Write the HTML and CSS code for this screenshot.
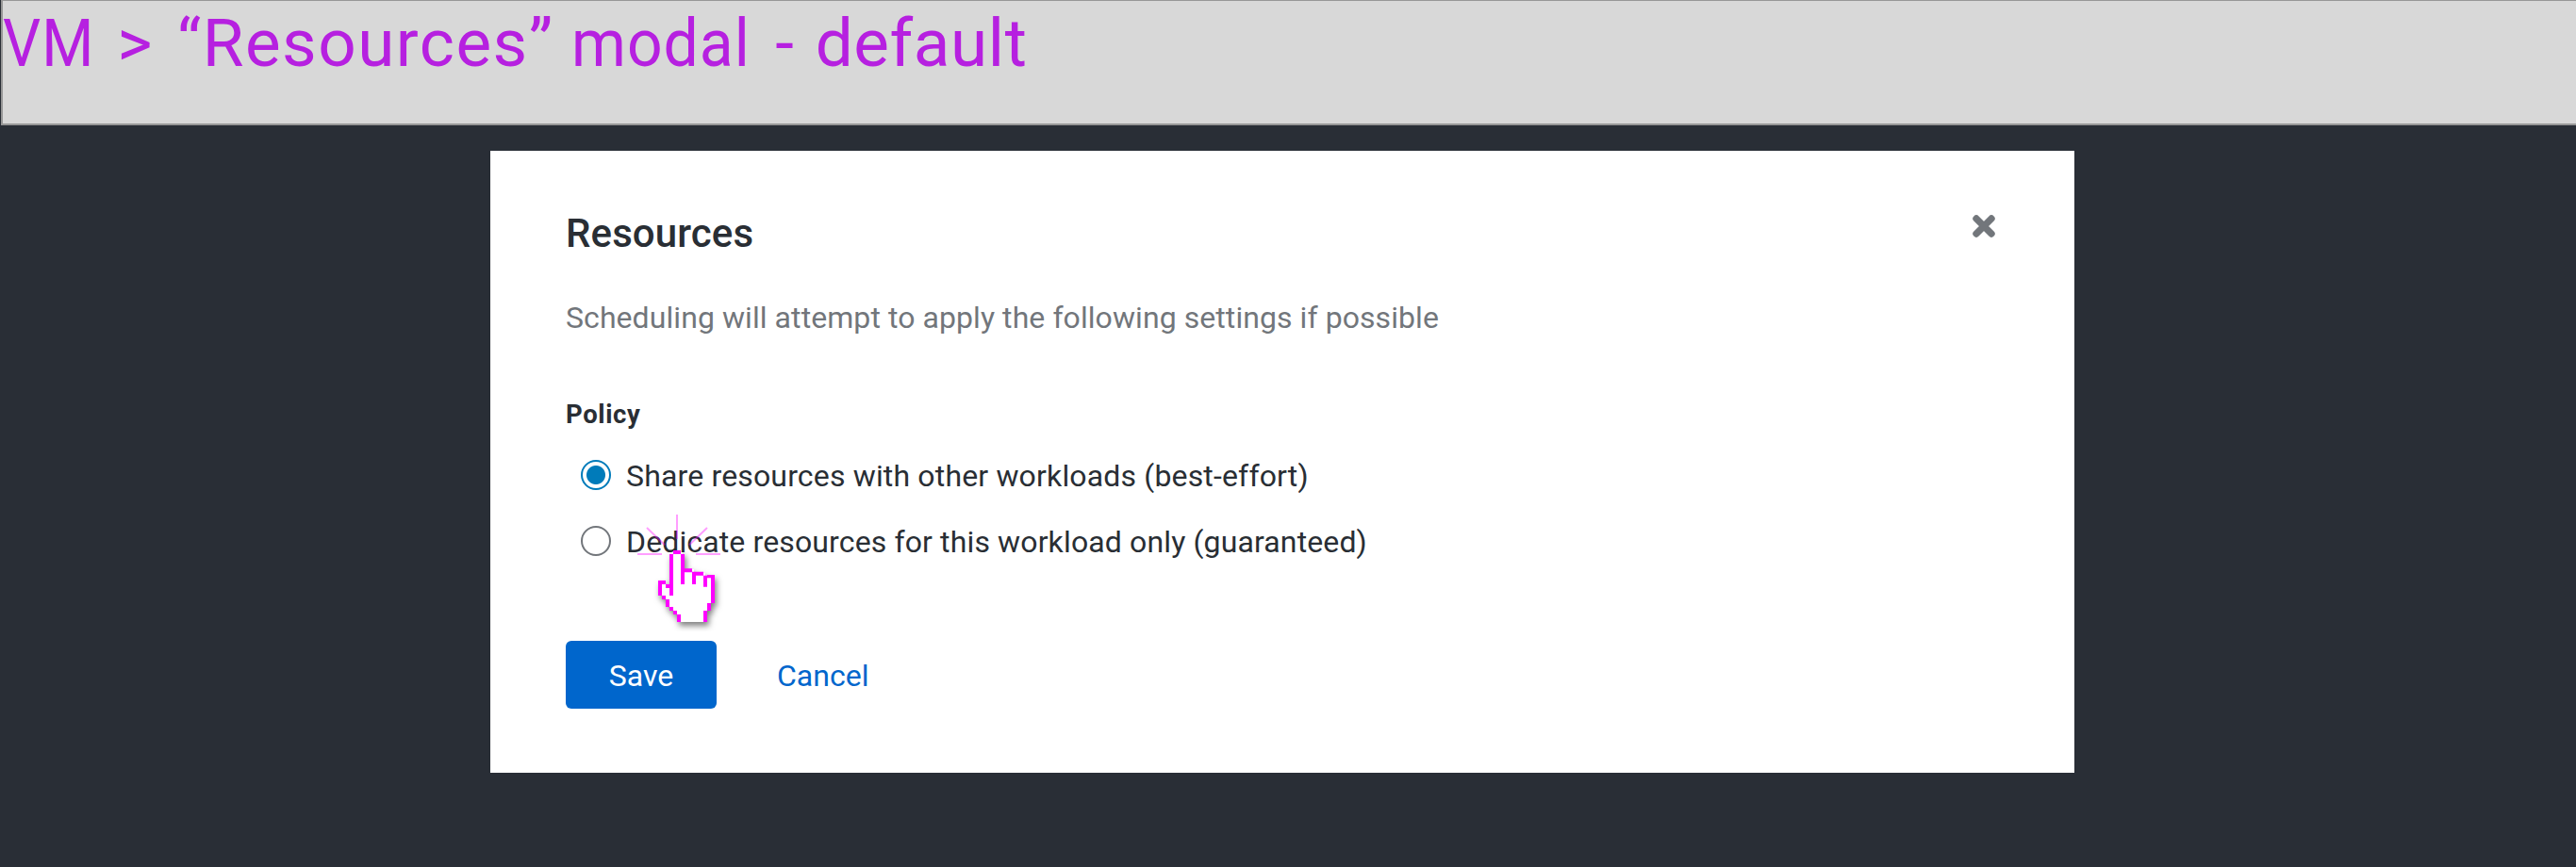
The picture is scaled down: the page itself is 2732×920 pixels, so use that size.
FILE: index.html
```html
<!DOCTYPE html>
<html lang="en">
<head>
<meta charset="utf-8">
<title>Resources</title>
<link rel="stylesheet" href="styles.css">
</head>
<body>
<header class="banner"><h1 class="banner-title"><span class="w-vm">VM</span> <span class="w-gt">&gt;</span> <span class="w-res">“Resources”</span> <span class="w-modal">modal</span> - <span class="w-default">default</span></h1></header>
<main class="backdrop">
<section class="modal" role="dialog" aria-labelledby="modal-title">
<div class="modal-head">
<h2 class="modal-title" id="modal-title">Resources</h2>
<button class="close" aria-label="Close"><svg width="24" height="24" viewBox="0 0 24 24"><path d="M4 4 20 20M20 4 4 20" stroke="#72767b" stroke-width="7.4" stroke-linecap="round"/></svg></button>
</div>
<p class="description">Scheduling will attempt to apply the following settings if possible</p>
<h3 class="group-label">Policy</h3>
<div class="options">
<label class="option"><span class="radio radio-on"></span><span class="option-text share">Share resources with other workloads (best-effort)</span></label>
<label class="option"><span class="radio"></span><span class="option-text dedicate">Dedicate resources for this workload only (guaranteed)</span>
<svg class="pointer" width="120" height="140" viewBox="0 0 360 420">
<g stroke="#f0f" stroke-opacity=".38" stroke-width="6" fill="none"><path d="M174 48V126M78 90 135 145M270 90 213 145M48 174H126M234 174H312"/></g>
<g class="hand"><path fill="#fff" d="M156 168H192V222H228V234H264V244H288V330H276V354H264V390H180V366H168V354H156V342H144V318H132V306H120V264H138V276H156Z"/>
<path fill="#f0f" d="M162 162h24v12h-24zM150 174h12v132h-12zM186 174h12v96h-12zM198 220h24v12h-24zM222 230h12v40h-12zM234 230h24v12h-24zM258 242h12v36h-12zM270 240h24v10h-24zM282 250h12v80h-12zM270 330h12v24h-12zM258 354h12v36h-12zM114 258h12v48h-12zM126 258h12v12h-12zM138 270h12v12h-12zM126 306h12v12h-12zM138 318h12v24h-12zM150 342h12v12h-12zM162 354h12v12h-12zM174 366h12v24h-12z"/></g>
</svg></label>
</div>
<div class="actions"><button class="save">Save</button><button class="cancel">Cancel</button></div>
</section>
</main>
</body>
</html>
```
FILE: styles.css
```css
*{box-sizing:border-box}
body{margin:0;height:920px;overflow:hidden;background:#292e36;font-family:Roboto,"Liberation Sans",sans-serif;color:#292e34;display:flex;flex-direction:column}
h1,h2,h3,p{margin:0;font-weight:400;white-space:nowrap}
button{font-family:inherit;border:0;padding:0;background:none}
.banner{height:133px;flex:none;margin-left:1px;background:#d8d8d8;border:solid #979797;border-width:1px 0 2px 2px}
.banner-title{font-size:71px;line-height:90px;color:#b620e0;letter-spacing:1.1px}
.w-vm{display:inline-block;transform:scaleX(.89);transform-origin:left;margin-right:-7px}
.w-gt{margin-right:7px}
.w-res{letter-spacing:1.5px}
.w-modal{display:inline-block;transform:scaleX(.93);transform-origin:left;margin-right:-7px}
.w-default{margin-left:3px;letter-spacing:.6px}
.backdrop{padding-top:27px;padding-left:520px}
.modal{width:1680px;height:660px;background:#fff;padding:60px 80px;display:flex;flex-direction:column;align-items:flex-start}
.modal-head{width:100%;height:56px;display:flex;justify-content:space-between}
.modal-title{font-size:42px;line-height:56px;font-weight:500;letter-spacing:.1px}
.close{width:24px;height:24px;margin:8px 4px 0 0}
.close svg{display:block;fill:none}
.description{margin-top:41px;font-size:32px;line-height:40px;color:#72767b;letter-spacing:.07px}
.group-label{margin-top:65px;font-size:27.5px;line-height:36px;font-weight:700;letter-spacing:.6px}
.options{margin:26px 0 0 16px;display:flex;flex-direction:column;gap:30px}
.option{position:relative;display:flex;align-items:center;gap:16px;height:40px}
.option-text{font-size:32px;line-height:40px;white-space:nowrap;padding-top:2px}
.share{letter-spacing:.16px}
.dedicate{letter-spacing:.13px}
.radio{width:32px;height:32px;border:2px solid #72767b;border-radius:50%;background:#fff}
.radio-on{border-color:#007bba;background:radial-gradient(circle,#007bba 9.5px,#fff 10.5px)}
.pointer{position:absolute;left:44px;top:-24px}
.hand{filter:drop-shadow(6px 12px 9px rgba(0,0,0,.5))}
.actions{display:flex;gap:64px;margin-top:86px}
.save,.cancel{height:72px;font-size:32px;line-height:72px;padding-top:1px}
.save{width:160px;background:#06c;color:#fff;border-radius:6px}
.cancel{color:#06c}
```
